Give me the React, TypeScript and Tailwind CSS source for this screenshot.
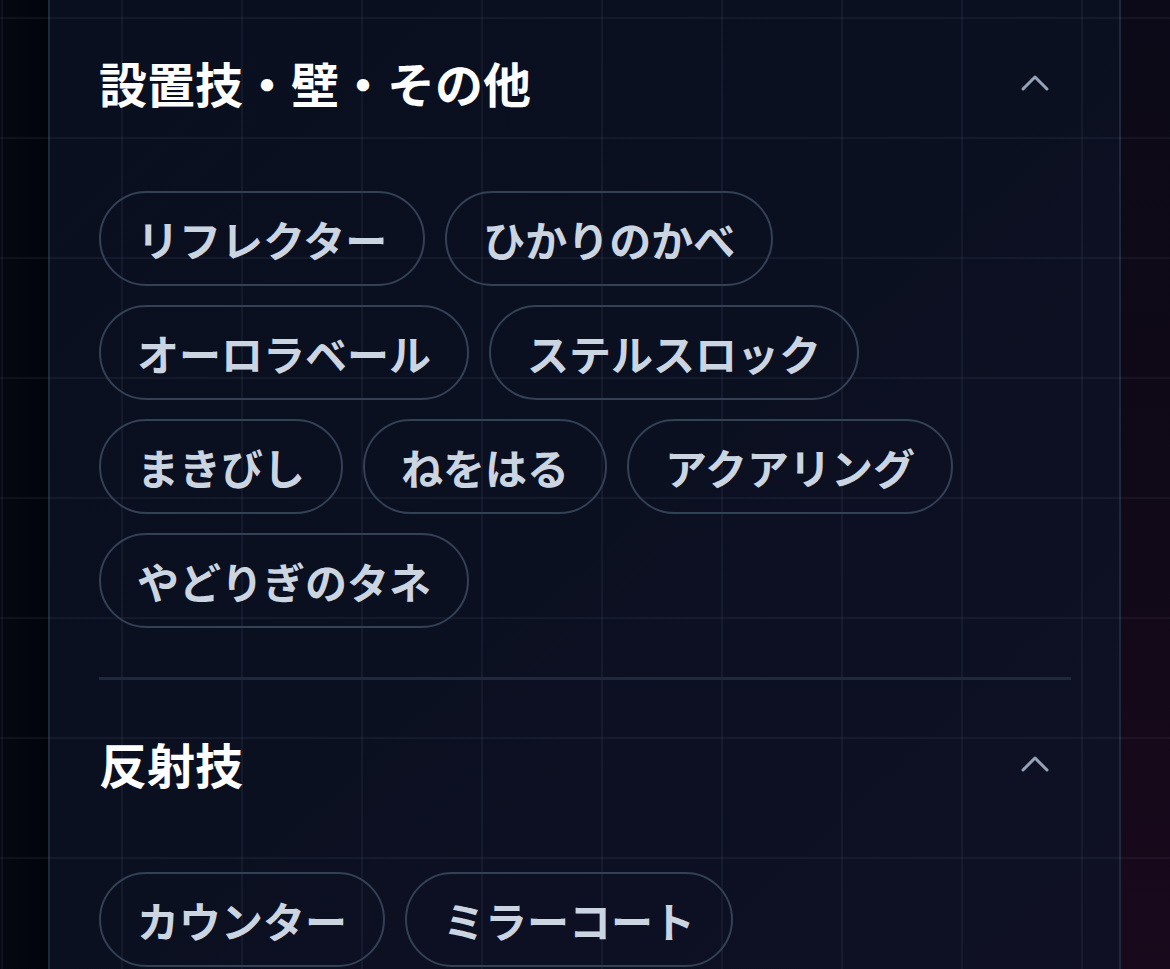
import React from 'react';
import { ChevronUp } from 'lucide-react';

type Section = {
  title: string;
  moves: string[];
};

const SECTIONS: Section[] = [
  {
    title: '設置技・壁・その他',
    moves: [
      'リフレクター',
      'ひかりのかべ',
      'オーロラベール',
      'ステルスロック',
      'まきびし',
      'ねをはる',
      'アクアリング',
      'やどりぎのタネ',
    ],
  },
  {
    title: '反射技',
    moves: ['カウンター', 'ミラーコート'],
  },
];

const MoveChip: React.FC<{ label: string }> = ({ label }) => (
  <button className="flex h-[95px] items-center rounded-full border-2 border-[#334155] px-[36px] text-[42px] leading-none font-semibold text-[#cbd5e1]">
    {label}
  </button>
);

const MoveSection: React.FC<{ section: Section; last?: boolean }> = ({ section, last }) => (
  <div className={last ? '' : 'border-b-[3px] border-[#1e293b]'}>
    {/* Header */}
    <div className="flex h-[168px] items-center justify-between">
      <h2 className="-mt-[3px] text-[48px] leading-none font-bold text-white">{section.title}</h2>
      <span className="p-[12px] text-[#94a3b8]">
        <ChevronUp size={48} strokeWidth={1.5} />
      </span>
    </div>

    {/* Chips */}
    <div className="flex flex-wrap gap-x-[20px] gap-y-[19px] pt-[24px] pb-[49px]">
      {section.moves.map((m) => (
        <MoveChip key={m} label={m} />
      ))}
    </div>
  </div>
);

export default function App() {
  return (
    <div className="relative flex h-[969px] w-[1170px] overflow-hidden bg-[#0b1020] font-['Noto_Sans_CJK_JP','Noto_Sans',sans-serif]">
      {/* Left backdrop */}
      <div className="w-[48px] shrink-0 bg-gradient-to-r from-[#050812] to-[#02040b]" />

      {/* Panel */}
      <div className="flex-1 border-x-2 border-[#1e293b] bg-gradient-to-br from-[#0a0f1f] via-[#0b1021] to-[#0f1024]" />

      {/* Right backdrop */}
      <div className="w-[49px] shrink-0 bg-gradient-to-b from-[#0c0a18] via-[#100917] to-[#19091c]" />

      {/* Grid overlay */}
      <div className="pointer-events-none absolute inset-0 bg-[linear-gradient(to_right,rgba(148,163,184,0.07)_2px,transparent_2px),linear-gradient(to_bottom,rgba(148,163,184,0.07)_2px,transparent_2px)] bg-[size:120px_120px] bg-[position:1px_17px]" />

      {/* Content */}
      <div className="absolute inset-y-0 left-[50px] right-[51px] mt-[-1px] pl-[49px] pr-[48px]">
        {SECTIONS.map((s, i) => (
          <MoveSection key={s.title} section={s} last={i === SECTIONS.length - 1} />
        ))}
      </div>
    </div>
  );
}
